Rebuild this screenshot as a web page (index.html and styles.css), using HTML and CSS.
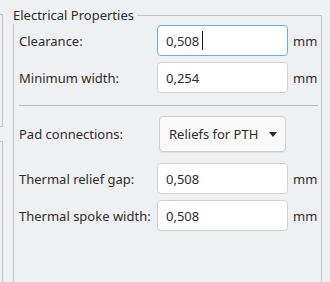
FILE: index.html
```html
<!DOCTYPE html>
<html lang="en">
<head>
  <meta charset="UTF-8">
  <title>Electrical Properties</title>
  <link rel="stylesheet" href="styles.css">
</head>
<body>
  <!-- left pane edges -->
  <div class="side">
    <div class="pane pane-top"></div>
    <div class="pane pane-bottom"></div>
  </div>

  <div class="group">
    <div class="group-title">Electrical Properties</div>
    <div class="rows">
      <div class="field">
        <div class="label">Clearance:</div>
        <div class="entry focused">0,508<span class="caret"></span></div>
        <div class="unit">mm</div>
      </div>
      <div class="field">
        <div class="label">Minimum width:</div>
        <div class="entry">0,254</div>
        <div class="unit">mm</div>
      </div>

      <div class="sep"></div>

      <div class="field field-combo">
        <div class="label">Pad connections:</div>
        <div class="combo">
          <span>Reliefs for PTH</span>
          <span class="arrow"></span>
        </div>
      </div>
      <div class="field">
        <div class="label">Thermal relief gap:</div>
        <div class="entry">0,508</div>
        <div class="unit">mm</div>
      </div>
      <div class="field">
        <div class="label">Thermal spoke width:</div>
        <div class="entry">0,508</div>
        <div class="unit">mm</div>
      </div>
    </div>
  </div>
</body>
</html>
```

FILE: styles.css
```css
body {
  margin: 0;
  height: 282px;
  overflow: hidden;
  display: flex;
  background-color: #eff0f1;
  font-family: 'Noto Sans', 'Open Sans', sans-serif;
  font-size: 13px;
  color: #2f2c29;
}

.side {
  width: 3px;
  margin-right: 10px;
  display: flex;
  flex-direction: column;
}

.pane {
  border: 1px solid #c3c3c3;
  border-left: none;
}

.pane-top {
  margin-top: 14px;
  height: 111px;
}

.pane-bottom {
  margin-top: 14px;
  flex: 1;
  border-bottom: none;
}

.group {
  position: relative;
  box-sizing: border-box;
  width: 309px;
  margin-top: 15px;
  padding: 9px 3px 0 5px;
  border: 1px solid #c6c6c6;
  border-bottom: none;
}

.group-title {
  position: absolute;
  top: -10px;
  left: -1px;
  padding-right: 3px;
  line-height: 18px;
  background-color: #eff0f1;
}

.rows {
  display: flex;
  flex-direction: column;
  gap: 6px;
}

.field {
  display: flex;
  align-items: center;
  height: 31px;
}

.field-combo {
  height: 36px;
  margin-bottom: 5px;
}

.label {
  width: 138px;
  flex: none;
}

.entry {
  box-sizing: border-box;
  width: 131px;
  height: 31px;
  padding-left: 8px;
  display: flex;
  align-items: center;
  background-color: #ffffff;
  border: 1px solid #d2d2d2;
  border-radius: 4px;
}

.entry.focused {
  border-color: #6aaae8;
}

.caret {
  display: inline-block;
  width: 1px;
  height: 19px;
  margin-left: 3px;
  background-color: #1a1a1a;
}

.unit {
  margin-left: 5px;
}

.sep {
  height: 1px;
  margin: 6px 0 4px;
  background-color: #b8b8b8;
}

.combo {
  box-sizing: border-box;
  width: 127px;
  height: 36px;
  margin-left: 2px;
  padding: 0 8px 0 9px;
  display: flex;
  align-items: center;
  justify-content: space-between;
  background-color: #f8f8f8;
  border: 1px solid #cfcfcf;
  border-radius: 4px;
  box-shadow: 0 1px 1px rgba(0, 0, 0, 0.06);
}

.arrow {
  width: 0;
  height: 0;
  border-left: 4px solid transparent;
  border-right: 4px solid transparent;
  border-top: 5px solid #2a2a2a;
}
```
